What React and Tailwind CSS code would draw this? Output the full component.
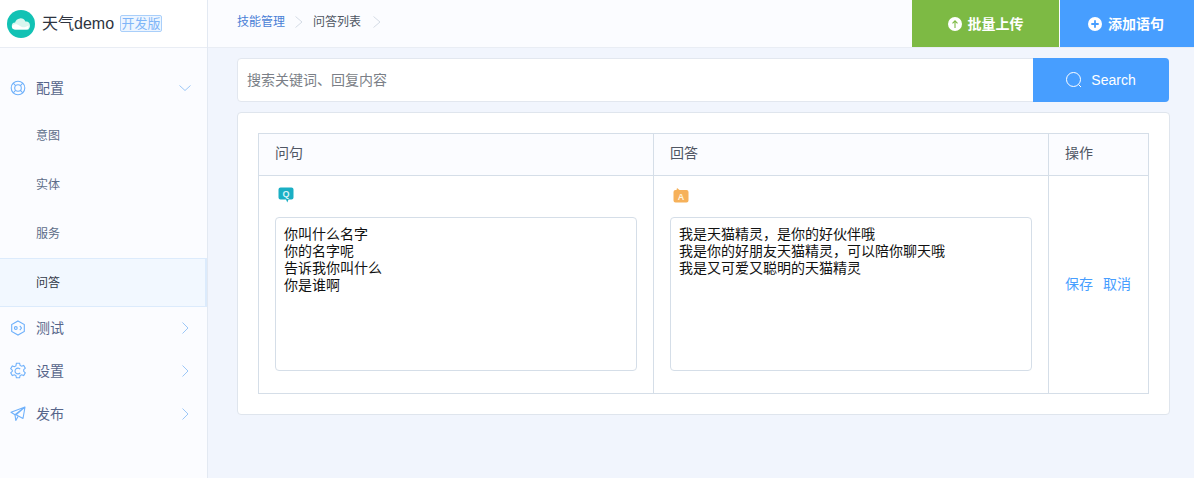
import React from "react";

const FONT = "font-['Helvetica_Neue','Liberation_Sans','Noto_Sans_CJK_SC',sans-serif]";

function Chevron({ down }) {
  return (
    <svg width="14" height="14" viewBox="0 0 14 14" fill="none" stroke="#9cc7f7" strokeWidth="1" className="shrink-0">
      {down ? <path d="M1.5 4.5 7 9.500l5.500-5" /> : <path d="M4.500 1.500 10 7l-5.500 5.500" />}
    </svg>
  );
}

function Crumb() {
  return (
    <svg width="10" height="14" viewBox="0 0 10 14" fill="none" stroke="#d5dce6" strokeWidth="1">
      <path d="M1.500 1.500 8 7l-6.500 5.500" />
    </svg>
  );
}

function IconRing() {
  return (
    <svg width="16" height="16" viewBox="0 0 16 16" fill="none" stroke="#6fb1fb" strokeWidth="1.100">
      <circle cx="8" cy="8" r="6.800" />
      <circle cx="8" cy="8" r="3.300" />
      <path d="M3.200 3.200l2.400 2.400M12.800 3.200l-2.400 2.400M3.200 12.800l2.400-2.400M12.800 12.800l-2.400-2.400" />
    </svg>
  );
}

function IconHex() {
  return (
    <svg width="16" height="16" viewBox="0 0 16 16" fill="none" stroke="#6fb1fb" strokeWidth="1.100">
      <path d="M8 1l6.300 3.500v7L8 15l-6.300-3.500v-7z" />
      <circle cx="5.800" cy="8" r="1.400" />
      <path d="M9.800 5.800 11.500 8l-1.700 2.200" />
    </svg>
  );
}

function IconGear() {
  return (
    <svg width="18" height="18" viewBox="0 0 18 18" fill="none" stroke="#6fb1fb" strokeWidth="1.100">
      <path d="M7.400 1.200h3.200l.5 2.200 1.500.8 2.100-.8 1.600 2.800-1.600 1.500v1.600l1.600 1.500-1.600 2.800-2.100-.8-1.500.8-.5 2.200H7.400l-.5-2.200-1.500-.8-2.100.8-1.600-2.800 1.600-1.500V8.200L1.700 6.700l1.600-2.800 2.100.8 1.500-.8z" />
      <path d="M11.200 7.200A2.900 2.900 0 1 0 11.200 10.800" />
    </svg>
  );
}

function IconPlane() {
  return (
    <svg width="16" height="16" viewBox="0 0 16 16" fill="none" stroke="#6fb1fb" strokeWidth="1.100" strokeLinejoin="round">
      <path d="M15 1 1 6.300l4 2.500L15 1l-2 11.500-7-3.700z" />
      <path d="M5 8.800 5.800 14.500 8.200 10.200" />
    </svg>
  );
}

function MenuRow({ icon, label, down, size = "h-[43px]" }) {
  return (
    <div className={`${size} flex items-center pr-[15px]`}>
      <div className="w-9 flex justify-center shrink-0">{icon}</div>
      <span className="flex-1 text-sm text-[#56658a]">{label}</span>
      <Chevron down={down} />
    </div>
  );
}

function SubRow({ label, active }) {
  return (
    <div
      className={
        active
          ? "h-[49px] flex items-center pl-9 text-xs text-[#333a47] bg-[#f2f8ff] border-y border-r-2 border-[#dcebfc]"
          : "h-[49px] flex items-center pl-9 text-xs text-[#5d6d88]"
      }
    >
      {label}
    </div>
  );
}

export default function App() {
  return (
    <div className={`${FONT} flex w-[1194px] h-[478px] overflow-hidden bg-[#f1f5fd]`}>
      <aside className="w-[208px] shrink-0 flex flex-col bg-[#fbfcff] border-r border-[#e3e9f2]">
        <div className="h-[48px] shrink-0 flex items-center pl-[7px] bg-white border-b border-[#e9edf4]">
          <svg width="28" height="28" viewBox="0 0 28 28" className="shrink-0">
            <circle cx="14" cy="14" r="14" fill="#12c2b4" />
            <path d="M8.500 19.500a3.500 3.500 0 0 1-.4-7 5.500 5.500 0 0 1 10.300-1 4 4 0 0 1 1.100 8z" fill="#d8f6ef" />
            <path d="M5 16c3-2.500 5-2 8 0s5 1.500 8.500-.5V19.500H8.500A3.500 3.500 0 0 1 5 16z" fill="#ffffff" />
          </svg>
          <span className="ml-[7px] text-base text-[#2e3440] leading-none">天气demo</span>
          <span className="ml-[6px] h-[17px] w-[42px] flex items-center justify-center text-[13px] leading-none text-[#7fb5f8] bg-[#edf5ff] border border-[#a9cffa] rounded-[2px]">
            开发版
          </span>
        </div>
        <nav className="pt-[19px] flex flex-col">
          <MenuRow icon={<IconRing />} label="配置" down size="h-[44px] pb-[2px]" />
          <SubRow label="意图" />
          <SubRow label="实体" />
          <SubRow label="服务" />
          <SubRow label="问答" active />
          <MenuRow icon={<IconHex />} label="测试" size="h-[42px]" />
          <MenuRow icon={<IconGear />} label="设置" />
          <MenuRow icon={<IconPlane />} label="发布" />
        </nav>
      </aside>

      <main className="flex-1 min-w-0 flex flex-col">
        <header className="h-[48px] shrink-0 flex items-stretch justify-between bg-[#fbfcff] border-b border-[#e9edf4]">
          <div className="flex items-center pl-[29px] pb-[3px] text-xs">
            <span className="text-[#4a7fd6]">技能管理</span>
            <span className="mx-[9px] flex"><Crumb /></span>
            <span className="text-[#4f5663]">问答列表</span>
            <span className="ml-[11px] flex"><Crumb /></span>
          </div>
          <div className="flex h-[47px]">
            <button className="w-[147px] flex items-center justify-center gap-[6px] text-sm font-semibold text-white bg-[#7dba44]">
              <svg width="14" height="14" viewBox="0 0 14 14">
                <circle cx="7" cy="7" r="7" fill="#fff" />
                <path d="M7 11V4M4.500 6.300 7 3.800l2.500 2.500" stroke="#7dba44" strokeWidth="1.100" fill="none" />
              </svg>
              批量上传
            </button>
            <button className="w-[134px] ml-px pr-[2px] flex items-center justify-center gap-[6px] text-sm font-semibold text-white bg-[#479eff]">
              <svg width="14" height="14" viewBox="0 0 14 14">
                <circle cx="7" cy="7" r="7" fill="#fff" />
                <path d="M7 3.300v7.400M3.300 7h7.400" stroke="#479eff" strokeWidth="1.800" />
              </svg>
              添加语句
            </button>
          </div>
        </header>

        <div className="pl-[29px] pr-6 pt-[10px] flex flex-col gap-[10px]">
          <div className="h-[44px] mr-px flex rounded-[4px] bg-white border border-[#e2e7ef]">
            <input
              readOnly
              placeholder="搜索关键词、回复内容"
              className="flex-1 min-w-0 px-[9px] text-sm bg-transparent outline-none placeholder:text-[#7b7f87]"
            />
            <button className="w-[136px] -my-px -mr-px flex items-center justify-center gap-[9px] rounded-r-[4px] text-sm font-medium text-white bg-[#479eff]">
              <svg width="16" height="16" viewBox="0 0 16 16" fill="none" stroke="#fff" strokeWidth="1">
                <circle cx="7.500" cy="7.500" r="7" />
                <path d="M12.500 12.500 15 15" />
              </svg>
              Search
            </button>
          </div>

          <section className="h-[303px] px-5 pt-5 rounded-[4px] bg-white border border-[#dfe5ed]">
            <div className="grid grid-cols-[395px_395px_1fr] h-[261px] border border-[#d5dee8] text-[#4f5663]">
              <div className="h-[42px] flex items-center pl-4 pb-[3px] text-sm bg-[#fbfcff] border-b border-r border-[#d5dee8]">问句</div>
              <div className="h-[42px] flex items-center pl-4 pb-[3px] text-sm bg-[#fbfcff] border-b border-r border-[#d5dee8]">回答</div>
              <div className="h-[42px] flex items-center pl-4 pb-[3px] text-sm bg-[#fbfcff] border-b border-[#d5dee8]">操作</div>

              <div className="h-[218px] pl-4 pr-4 pt-[11px] border-r border-[#d5dee8]">
                <svg width="16" height="16" viewBox="0 0 16 16" className="block ml-[3px]">
                  <path d="M2.500 0.500h11a2 2 0 0 1 2 2v8a2 2 0 0 1-2 2h-3L9.300 15.500 8 12.500H2.500a2 2 0 0 1-2-2v-8a2 2 0 0 1 2-2z" fill="#1aafc4" />
                  <text x="8" y="10" textAnchor="middle" fontSize="9" fontWeight="700" fill="#d9f4f8" fontFamily="Liberation Sans">Q</text>
                </svg>
                <textarea
                  readOnly
                  className="block mt-[14px] w-[362px] h-[154px] resize-none rounded-[4px] border border-[#d5dee8] px-2 pt-[8px] text-sm leading-[17px] text-[#111] outline-none"
                  defaultValue={"你叫什么名字\n你的名字呢\n告诉我你叫什么\n你是谁啊"}
                />
              </div>

              <div className="h-[218px] pl-4 pr-4 pt-[11px] border-r border-[#d5dee8]">
                <svg width="16" height="16" viewBox="0 0 16 16" className="block ml-[3px]">
                  <path d="M2.500 3H3.500L4 1l2.500 2h7a2 2 0 0 1 2 2v8.500a2 2 0 0 1-2 2h-11a2 2 0 0 1-2-2V5a2 2 0 0 1 2-2z" fill="#f6b15a" />
                  <text x="8" y="13" textAnchor="middle" fontSize="9" fontWeight="700" fill="#fff3df" fontFamily="Liberation Sans">A</text>
                </svg>
                <textarea
                  readOnly
                  className="block mt-[14px] w-[362px] h-[154px] resize-none rounded-[4px] border border-[#d5dee8] px-2 pt-[8px] text-sm leading-[17px] text-[#111] outline-none"
                  defaultValue={"我是天猫精灵，是你的好伙伴哦\n我是你的好朋友天猫精灵，可以陪你聊天哦\n我是又可爱又聪明的天猫精灵"}
                />
              </div>

              <div className="h-[218px] flex items-center gap-[10px] pl-4 pb-[2px] text-sm text-[#479eff]">
                <span>保存</span>
                <span>取消</span>
              </div>
            </div>
          </section>
        </div>
      </main>
    </div>
  );
}
